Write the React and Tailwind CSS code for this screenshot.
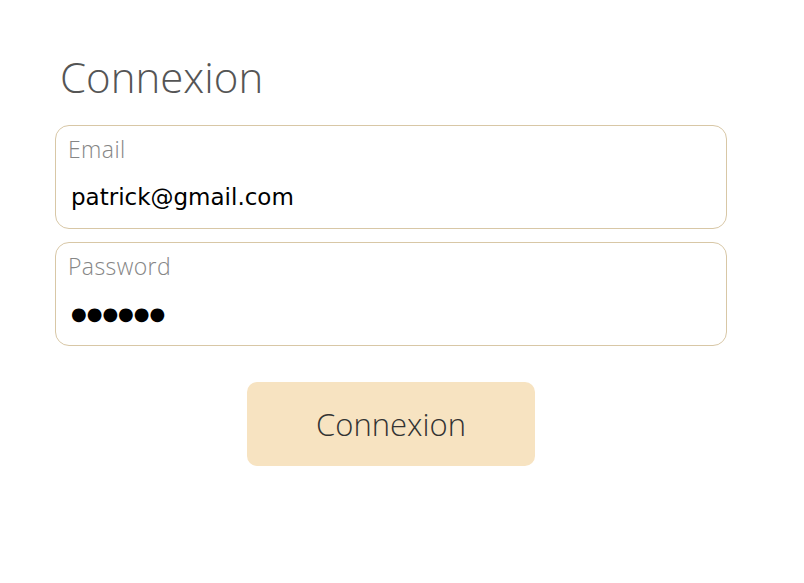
export default function App() {
  return (
    <div className="min-h-screen bg-white" style={{ fontFamily: '"Open Sans", Lato, sans-serif' }}>
      <div className="w-[672px] ml-[55px] pt-[52px]">
        <h1 className="ml-[5px] text-[42px] leading-[50px] font-light text-[#555]">Connexion</h1>

        <div className="mt-[23px] flex flex-col gap-[13px]">
          <label className="block h-[104px] rounded-[14px] border border-[#d8c7a6] px-[12px] pt-[8px]">
            <span className="block text-[23px] leading-[30px] font-light tracking-[0.4px] text-[#868686]">Email</span>
            <input
              type="email"
              readOnly
              value="patrick@gmail.com"
              className="mt-[19px] w-full px-[3px] text-[23px] leading-[28px] text-black outline-none bg-transparent"
              style={{ fontFamily: '"DejaVu Sans", sans-serif' }}
            />
          </label>
          <label className="block h-[104px] rounded-[14px] border border-[#d8c7a6] px-[12px] pt-[8px]">
            <span className="block text-[23px] leading-[30px] font-light tracking-[0.4px] text-[#868686]">Password</span>
            <div
              className="mt-[19px] px-[3px] text-[18px] leading-[28px] text-black"
              style={{ fontFamily: '"DejaVu Sans", sans-serif' }}
            >
              ●●●●●●
            </div>
          </label>
        </div>

        <div className="mt-[36px] flex justify-center">
          <button className="w-[288px] h-[84px] rounded-[10px] bg-[#f7e3c1] text-[31px] font-light text-[#333]">
            Connexion
          </button>
        </div>
      </div>
    </div>
  )
}
